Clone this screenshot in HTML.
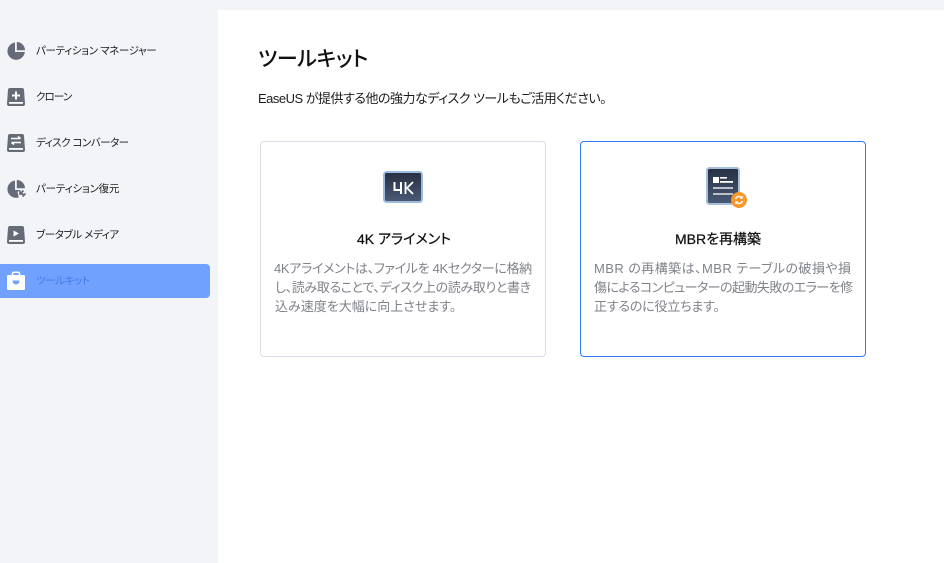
<!DOCTYPE html>
<html lang="ja"><head><meta charset="utf-8">
<style>
html,body{margin:0;padding:0;width:944px;height:563px;overflow:hidden;background:#f2f4f8}
body{position:relative;font-family:"Liberation Sans","Noto Sans CJK JP",sans-serif;font-feature-settings:"palt";color:#111}
.t{position:absolute;white-space:nowrap;line-height:1}
#main{position:absolute;left:218px;top:10px;width:726px;height:553px;background:#fff}
#act{position:absolute;left:0;top:264px;width:210px;height:34px;background:#70a1ff;border-radius:0 4px 4px 0}
.nav{font-size:10.5px;left:36px;color:#1c1c1e}
.card{position:absolute;top:141px;width:284px;height:214px;background:#fff;border:1px solid #d8dfea;border-radius:4px}
.h{font-size:14px;font-weight:400;color:#111;-webkit-text-stroke:.25px #111}
.d{font-size:13px;color:#7f8289}
svg{position:absolute}
</style></head><body>
<div id="main"></div>
<div id="act"></div>

<svg style="left:7px;top:41px" width="18" height="19" viewBox="0 0 18 19"><path d="M8 1.500A8.700 8.700 0 1 0 17.800 11H8Z" fill="#666b78"/><path d="M9.800 1V9.300H18A8.300 8.300 0 0 0 9.800 1Z" fill="#666b78"/></svg>
<svg style="left:7px;top:87px" width="18" height="19" viewBox="0 0 18 19"><path d="M3 1H15A2 2 0 0 1 17 3L18 16.500A2 2 0 0 1 16 19H2A2 2 0 0 1 0 16.500L1 3A2 2 0 0 1 3 1Z" fill="#666b78"/><path d="M8 4.500H10V7.500H13V9.500H10V12.500H8V9.500H5V7.500H8Z" fill="#fff"/><rect x="2" y="15" width="14" height="1.800" fill="#fff"/></svg>
<svg style="left:7px;top:133px" width="18" height="19" viewBox="0 0 18 19"><path d="M3 1H15A2 2 0 0 1 17 3L18 16.500A2 2 0 0 1 16 19H2A2 2 0 0 1 0 16.500L1 3A2 2 0 0 1 3 1Z" fill="#666b78"/><path d="M4 5.500H13.500M11 3.500L13.500 5.500M4.500 9.500H14M4.500 9.500L7 11.500" fill="none" stroke="#fff" stroke-width="1.500"/><rect x="2" y="15" width="14" height="1.800" fill="#fff"/></svg>
<svg style="left:7px;top:179px" width="19" height="19" viewBox="0 0 19 19"><path d="M8 1.500A8.700 8.700 0 1 0 17.800 11H8Z" fill="#666b78"/><path d="M9.800 1V9.300H18A8.300 8.300 0 0 0 9.800 1Z" fill="#666b78"/><path d="M10.500 13L15 9.500H19V19H12Z" fill="#f2f4f8"/><path d="M16.500 11.500L13 15M13 11.500V15H16.500M18.500 14.500L15.500 17.500" fill="none" stroke="#666b78" stroke-width="1.700"/></svg>
<svg style="left:7px;top:225px" width="18" height="19" viewBox="0 0 18 19"><path d="M3 1H15A2 2 0 0 1 17 3L18 16.500A2 2 0 0 1 16 19H2A2 2 0 0 1 0 16.500L1 3A2 2 0 0 1 3 1Z" fill="#666b78"/><path d="M6.500 5.500L12 8.500L6.500 11.500Z" fill="#fff"/><rect x="2" y="15" width="14" height="1.800" fill="#fff"/></svg>
<svg style="left:7px;top:271px" width="18" height="19" viewBox="0 0 18 19"><path d="M5.500 5V2.800A1.500 1.500 0 0 1 7 1.300H11A1.500 1.500 0 0 1 12.500 2.800V5" fill="none" stroke="#fff" stroke-width="1.500"/><path d="M1.500 4H16.500A1.500 1.500 0 0 1 18 5.500V17.500A1.500 1.500 0 0 1 16.500 19H1.500A1.500 1.500 0 0 1 0 17.500V5.500A1.500 1.500 0 0 1 1.500 4Z" fill="#fff"/><path d="M5.500 9.500H12.500A3.500 4 0 0 1 5.500 9.500Z" fill="#70a1ff"/></svg>

<div class="t nav" style="top:46px;letter-spacing:-.35px">パーティション マネージャー</div>
<div class="t nav" style="top:92px;letter-spacing:-.85px">クローン</div>
<div class="t nav" style="top:138px;letter-spacing:-.5px">ディスク コンバーター</div>
<div class="t nav" style="top:184px;letter-spacing:-.2px">パーティション復元</div>
<div class="t nav" style="top:230px;letter-spacing:-.4px">ブータブル メディア</div>
<div class="t nav" style="top:276px;letter-spacing:-.4px;color:#3f7be8">ツールキット</div>

<div class="t" style="left:258px;top:49px;font-size:21px;font-weight:500;letter-spacing:-.35px;color:#111">ツールキット</div>
<div class="t" style="left:258px;top:92px;font-size:13px;letter-spacing:-.5px;color:#1c1c1e">EaseUS が提供する他の強力なディスク ツールもご活用ください。</div>

<div class="card" style="left:260px"></div>
<div class="card" style="left:580px;border-color:#2f7bf0"></div>

<svg style="left:381px;top:170px" width="44" height="34" viewBox="0 0 44 34"><defs><linearGradient id="g" x1="0" y1="0" x2="0" y2="1"><stop offset="0" stop-color="#272f40"/><stop offset="1" stop-color="#4a5a76"/></linearGradient></defs><rect x="3" y="2" width="38" height="30" rx="2.500" fill="url(#g)" stroke="#9dbbdd" stroke-width="2"/><path d="M13.500 12V20H21M20 12V24" fill="none" stroke="#fff" stroke-width="2"/><path d="M24.500 12V24M32 12L26 18L32 24" fill="none" stroke="#fff" stroke-width="1.800"/></svg>

<svg style="left:705px;top:166px" width="44" height="44" viewBox="0 0 44 44"><defs><linearGradient id="g2" x1="0" y1="0" x2="0" y2="1"><stop offset="0" stop-color="#272f40"/><stop offset="1" stop-color="#4a5a76"/></linearGradient></defs><rect x="2" y="2" width="32" height="36" rx="2.500" fill="url(#g2)" stroke="#a6bfdc" stroke-width="2"/><rect x="8" y="11" width="6" height="6" fill="#fff"/><rect x="15" y="11" width="7" height="1.600" fill="#fff"/><rect x="15" y="15" width="13" height="1.800" fill="#fff"/><rect x="8" y="21" width="20" height="2" fill="#bcc0c8"/><rect x="8" y="27" width="20" height="2" fill="#bcc0c8"/><circle cx="34" cy="34" r="8" fill="#f9962a"/><path d="M30.500 33A3.700 3.700 0 0 1 37 32M37.500 35A3.700 3.700 0 0 1 31 36" fill="none" stroke="#fff" stroke-width="1.500"/><path d="M37.800 29.500V32.800H34.600M30.200 38.500V35.200H33.400" fill="#fff"/></svg>

<div class="t h" style="left:357px;top:232px">4K アライメント</div>
<div class="t d" style="left:274px;top:262px;letter-spacing:-.32px">4Kアライメントは、ファイルを 4Kセクターに格納</div>
<div class="t d" style="left:275px;top:281px;letter-spacing:-.35px">し、読み取ることで、ディスク上の読み取りと書き</div>
<div class="t d" style="left:275px;top:300px">込み速度を大幅に向上させます。</div>

<div class="t h" style="left:675px;top:232px">MBRを再構築</div>
<div class="t d" style="left:594px;top:262px;letter-spacing:.45px">MBR の再構築は、MBR テーブルの破損や損</div>
<div class="t d" style="left:594px;top:281px;letter-spacing:-.55px">傷によるコンピューターの起動失敗のエラーを修</div>
<div class="t d" style="left:594px;top:300px;letter-spacing:-.2px">正するのに役立ちます。</div>
</body></html>
